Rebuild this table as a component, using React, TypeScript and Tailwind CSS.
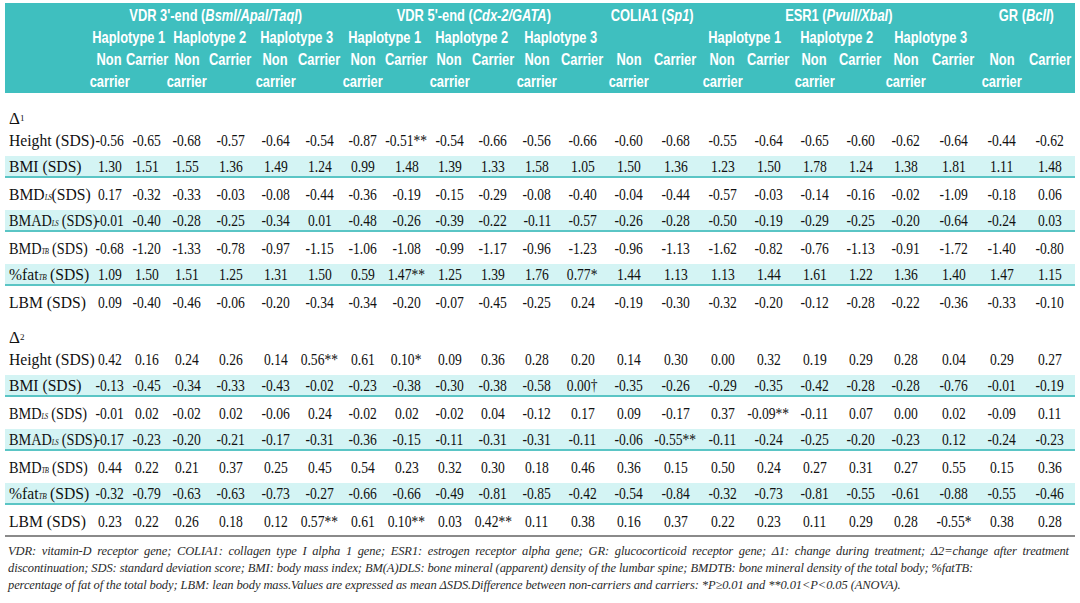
import type { ReactNode } from "react";

const grid =
  "grid grid-cols-[86px_37px_38px_42px_45px_45px_43px_44px_43px_43px_44px_44px_47px_46px_47px_47px_45px_47px_45px_46px_49px_48px_48px]";

const sans = "[font-family:'Liberation_Sans',Arial,sans-serif]";
const serif = "[font-family:'Liberation_Serif','Times_New_Roman',serif]";

function Hd({ children }: { children: ReactNode }) {
  return (
    <span className="inline-block origin-center scale-x-[0.78] whitespace-nowrap">
      {children}
    </span>
  );
}

function HCell({ span = 1, children }: { span?: number; children?: ReactNode }) {
  const spans: Record<number, string> = {
    1: "col-span-1",
    2: "col-span-2",
    6: "col-span-6",
  };
  return (
    <div className={`${spans[span]} flex h-[22px] items-center justify-center`}>
      {children && <Hd>{children}</Hd>}
    </div>
  );
}

const Sub = ({ children }: { children: ReactNode }) => (
  <span className="text-[8px] tracking-[-0.5px] italic">{children}</span>
);

type Row = { label: ReactNode; values: string[]; shaded?: boolean; tight?: boolean };

const delta1: Row[] = [
  {
    label: "Height (SDS)",
    values: "-0.56 -0.65 -0.68 -0.57 -0.64 -0.54 -0.87 -0.51** -0.54 -0.66 -0.56 -0.66 -0.60 -0.68 -0.55 -0.64 -0.65 -0.60 -0.62 -0.64 -0.44 -0.62".split(" "),
  },
  {
    label: "BMI (SDS)",
    shaded: true,
    values: "1.30 1.51 1.55 1.36 1.49 1.24 0.99 1.48 1.39 1.33 1.58 1.05 1.50 1.36 1.23 1.50 1.78 1.24 1.38 1.81 1.11 1.48".split(" "),
  },
  {
    label: (
      <>
        BMD<Sub>LS</Sub>(SDS)
      </>
    ),
    values: "0.17 -0.32 -0.33 -0.03 -0.08 -0.44 -0.36 -0.19 -0.15 -0.29 -0.08 -0.40 -0.04 -0.44 -0.57 -0.03 -0.14 -0.16 -0.02 -1.09 -0.18 0.06".split(" "),
  },
  {
    label: (
      <>
        BMAD<Sub>LS</Sub> (SDS)
      </>
    ),
    shaded: true,
    tight: true,
    values: "-0.01 -0.40 -0.28 -0.25 -0.34 0.01 -0.48 -0.26 -0.39 -0.22 -0.11 -0.57 -0.26 -0.28 -0.50 -0.19 -0.29 -0.25 -0.20 -0.64 -0.24 0.03".split(" "),
  },
  {
    label: (
      <>
        BMD<Sub>TB</Sub> (SDS)
      </>
    ),
    tight: true,
    values: "-0.68 -1.20 -1.33 -0.78 -0.97 -1.15 -1.06 -1.08 -0.99 -1.17 -0.96 -1.23 -0.96 -1.13 -1.62 -0.82 -0.76 -1.13 -0.91 -1.72 -1.40 -0.80".split(" "),
  },
  {
    label: (
      <>
        %fat<Sub>TB</Sub> (SDS)
      </>
    ),
    shaded: true,
    values: "1.09 1.50 1.51 1.25 1.31 1.50 0.59 1.47** 1.25 1.39 1.76 0.77* 1.44 1.13 1.13 1.44 1.61 1.22 1.36 1.40 1.47 1.15".split(" "),
  },
  {
    label: "LBM (SDS)",
    values: "0.09 -0.40 -0.46 -0.06 -0.20 -0.34 -0.34 -0.20 -0.07 -0.45 -0.25 0.24 -0.19 -0.30 -0.32 -0.20 -0.12 -0.28 -0.22 -0.36 -0.33 -0.10".split(" "),
  },
];

const delta2: Row[] = [
  {
    label: "Height (SDS)",
    values: "0.42 0.16 0.24 0.26 0.14 0.56** 0.61 0.10* 0.09 0.36 0.28 0.20 0.14 0.30 0.00 0.32 0.19 0.29 0.28 0.04 0.29 0.27".split(" "),
  },
  {
    label: "BMI (SDS)",
    shaded: true,
    values: "-0.13 -0.45 -0.34 -0.33 -0.43 -0.02 -0.23 -0.38 -0.30 -0.38 -0.58 0.00† -0.35 -0.26 -0.29 -0.35 -0.42 -0.28 -0.28 -0.76 -0.01 -0.19".split(" "),
  },
  {
    label: (
      <>
        BMD<Sub>LS</Sub> (SDS)
      </>
    ),
    tight: true,
    values: "-0.01 0.02 -0.02 0.02 -0.06 0.24 -0.02 0.02 -0.02 0.04 -0.12 0.17 0.09 -0.17 0.37 -0.09** -0.11 0.07 0.00 0.02 -0.09 0.11".split(" "),
  },
  {
    label: (
      <>
        BMAD<Sub>LS</Sub> (SDS)
      </>
    ),
    shaded: true,
    tight: true,
    values: "-0.17 -0.23 -0.20 -0.21 -0.17 -0.31 -0.36 -0.15 -0.11 -0.31 -0.31 -0.11 -0.06 -0.55** -0.11 -0.24 -0.25 -0.20 -0.23 0.12 -0.24 -0.23".split(" "),
  },
  {
    label: (
      <>
        BMD<Sub>TB</Sub> (SDS)
      </>
    ),
    tight: true,
    values: "0.44 0.22 0.21 0.37 0.25 0.45 0.54 0.23 0.32 0.30 0.18 0.46 0.36 0.15 0.50 0.24 0.27 0.31 0.27 0.55 0.15 0.36".split(" "),
  },
  {
    label: (
      <>
        %fat<Sub>TB</Sub> (SDS)
      </>
    ),
    shaded: true,
    values: "-0.32 -0.79 -0.63 -0.63 -0.73 -0.27 -0.66 -0.66 -0.49 -0.81 -0.85 -0.42 -0.54 -0.84 -0.32 -0.73 -0.81 -0.55 -0.61 -0.88 -0.55 -0.46".split(" "),
  },
  {
    label: "LBM (SDS)",
    values: "0.23 0.22 0.26 0.18 0.12 0.57** 0.61 0.10** 0.03 0.42** 0.11 0.38 0.16 0.37 0.22 0.23 0.11 0.29 0.28 -0.55* 0.38 0.28".split(" "),
  },
];

function DataRow({ row }: { row: Row }) {
  return (
    <div
      className={`${grid} h-[22px] items-center ${
        row.shaded ? "border-b-2 border-[#5ac5c5] bg-[#d4f4f4]" : ""
      }`}
    >
      <div className="flex items-center pl-[4px]">
        <span
          className={`inline-block origin-left whitespace-nowrap ${
            row.tight ? "scale-x-[0.84]" : "scale-x-[0.92]"
          }`}
        >
          {row.label}
        </span>
      </div>
      {row.values.map((v, i) => (
        <div key={i} className="flex justify-center">
          <span className="inline-block origin-center scale-x-[0.8] whitespace-nowrap">
            {v}
          </span>
        </div>
      ))}
    </div>
  );
}

function Section({ delta, rows }: { delta: string; rows: Row[] }) {
  return (
    <div>
      <div className="flex h-[22px] items-center pl-[4px]">
        Δ<span className="text-[9px]">{delta}</span>
      </div>
      <div className="flex flex-col gap-[5px]">
        {rows.map((r, i) => (
          <DataRow key={i} row={r} />
        ))}
      </div>
    </div>
  );
}

export default function App() {
  const pairs = Array.from({ length: 11 });

  return (
    <div className="h-[603px] w-[1080px] overflow-hidden bg-white px-[5px] pt-[3px]">
      <div className={`${grid} ${sans} bg-[#3fbfbf] py-[1px] text-[16.5px] font-bold leading-none text-white`}>
        <HCell />
        <HCell span={6}>
          VDR 3'-end (<i>BsmI/ApaI/TaqI</i>)
        </HCell>
        <HCell span={6}>
          VDR 5'-end (<i>Cdx-2/GATA</i>)
        </HCell>
        <HCell span={2}>
          COLIA1 (<i>Sp1</i>)
        </HCell>
        <HCell span={6}>
          ESR1 (<i>PvuII/XbaI</i>)
        </HCell>
        <HCell span={2}>
          GR (<i>BclI</i>)
        </HCell>

        <HCell />
        <HCell span={2}>Haplotype 1</HCell>
        <HCell span={2}>Haplotype 2</HCell>
        <HCell span={2}>Haplotype 3</HCell>
        <HCell span={2}>Haplotype 1</HCell>
        <HCell span={2}>Haplotype 2</HCell>
        <HCell span={2}>Haplotype 3</HCell>
        <HCell span={2} />
        <HCell span={2}>Haplotype 1</HCell>
        <HCell span={2}>Haplotype 2</HCell>
        <HCell span={2}>Haplotype 3</HCell>
        <HCell span={2} />

        <div />
        {pairs.map((_, i) => (
          <div key={i} className="col-span-2 grid grid-cols-subgrid">
            <div className="flex flex-col">
              <HCell>Non</HCell>
              <HCell>carrier</HCell>
            </div>
            <HCell>Carrier</HCell>
          </div>
        ))}
      </div>

      <div className={`${serif} text-[17px] leading-none text-[#111]`}>
        <div className="mt-[14px]">
          <Section delta="1" rows={delta1} />
        </div>
        <div className="mt-[13px]">
          <Section delta="2" rows={delta2} />
        </div>
        <div className="mt-[3px] h-[2px] bg-[#8a8a8a]" />
      </div>

      <div className={`${serif} mt-[6px] pl-[3px] pr-[6px] text-[12.5px] leading-[17px] tracking-[-0.1px] text-[#2a2a2a] italic`}>
        <div className="whitespace-nowrap [text-align-last:justify]">
          VDR: vitamin-D receptor gene; COLIA1: collagen type I alpha 1 gene; ESR1: estrogen receptor alpha gene; GR: glucocorticoid receptor gene; Δ1: change during treatment; Δ2=change after treatment
        </div>
        <div className="whitespace-nowrap">
          discontinuation; SDS: standard deviation score; BMI: body mass index; BM(A)DLS: bone mineral (apparent) density of the lumbar spine; BMDTB: bone mineral density of the total body; %fatTB:
        </div>
        <div className="whitespace-nowrap">
          percentage of fat of the total body; LBM: lean body mass.Values are expressed as mean ΔSDS.Difference between non-carriers and carriers: *P≥0.01 and **0.01&lt;P&lt;0.05 (ANOVA).
        </div>
      </div>
    </div>
  );
}
